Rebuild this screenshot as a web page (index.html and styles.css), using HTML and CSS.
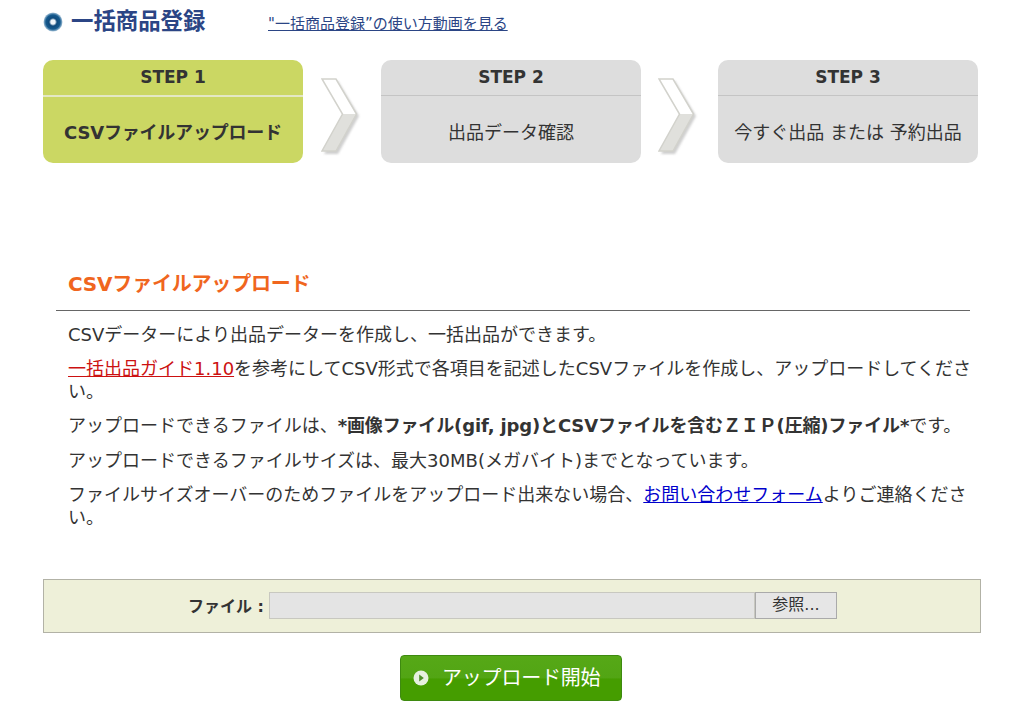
FILE: index.html
```html
<!DOCTYPE html>
<html lang="ja">
<head>
<meta charset="utf-8">
<title>一括商品登録</title>
<link rel="stylesheet" href="styles.css">
</head>
<body>
<header class="head">
  <h1 class="title">
    <svg class="bullet" width="20" height="20" viewBox="0 0 20 20"><defs><radialGradient id="bl" cx="50%" cy="50%" r="50%"><stop offset="0.22" stop-color="#f2f7fb"/><stop offset="0.42" stop-color="#0f4a7c"/><stop offset="0.75" stop-color="#155a8e"/><stop offset="1" stop-color="#a5c2d8"/></radialGradient></defs><circle cx="10" cy="10" r="9.500" fill="url(#bl)"/></svg>
    <span class="title-text">一括商品登録</span>
  </h1>
  <a class="movie" href="#">"一括商品登録”の使い方動画を見る</a>
</header>
<ol class="steps">
  <li class="step on"><div class="num">STEP 1</div><div class="desc">CSVファイルアップロード</div></li>
  <li class="arrow"><svg width="40" height="78" viewBox="0 0 40 78"><defs><filter id="s" x="-20%" y="-20%" width="140%" height="140%"><feGaussianBlur stdDeviation="1"/></filter></defs><path d="M3 3H17L38 38L17 76H3L24 38Z" fill="#bbb" filter="url(#s)" opacity=".7"/><path d="M1 1H15.500L35 36H21.500Z" fill="#fff"/><path d="M21.500 36H35.500L15 73H1Z" fill="#e0e0dc"/><path d="M1 1H15L35.500 36L15 73H1L21.500 36Z" fill="none" stroke="#d2d2cc" stroke-width="1.500"/></svg></li>
  <li class="step"><div class="num">STEP 2</div><div class="desc">出品データ確認</div></li>
  <li class="arrow arrow-b"><svg width="40" height="78" viewBox="0 0 40 78"><path d="M3 3H17L38 38L17 76H3L24 38Z" fill="#bbb" filter="url(#s)" opacity=".7"/><path d="M1 1H15.500L35 36H21.500Z" fill="#fff"/><path d="M21.500 36H35.500L15 73H1Z" fill="#e0e0dc"/><path d="M1 1H15L35.500 36L15 73H1L21.500 36Z" fill="none" stroke="#d2d2cc" stroke-width="1.500"/></svg></li>
  <li class="step"><div class="num">STEP 3</div><div class="desc">今すぐ出品 または 予約出品</div></li>
</ol>
<section class="intro">
  <h2 class="sub">CSVファイルアップロード</h2>
  <div class="body">
    <p>CSVデーターにより出品データーを作成し、一括出品ができます。</p>
    <p><a class="guide" href="#">一括出品ガイド1.10</a>を参考にしてCSV形式で各項目を記述したCSVファイルを作成し、アップロードしてください。</p>
    <p>アップロードできるファイルは、<b class="strong">*画像ファイル(gif, jpg)とCSVファイルを含むＺＩＰ(圧縮)ファイル*</b>です。</p>
    <p>アップロードできるファイルサイズは、最大30MB(メガバイト)までとなっています。</p>
    <p>ファイルサイズオーバーのためファイルをアップロード出来ない場合、<a class="form" href="#">お問い合わせフォーム</a>よりご連絡ください。</p>
  </div>
</section>
<div class="filebar">
  <b class="label">ファイル :</b>
  <span class="field"></span>
  <span class="browse">参照...</span>
</div>
<div class="submit">
  <button class="go" type="button">
    <svg width="16" height="16" viewBox="0 0 16 16"><circle cx="8" cy="8" r="7.500" fill="#e6f0df"/><path d="M6.200 4.500L10.800 8L6.200 11.500Z" fill="#4f8f2a"/></svg>
    <span class="go-text">アップロード開始</span>
  </button>
</div>
</body>
</html>
```
FILE: styles.css
```css
* { box-sizing: border-box; }
html, body { margin: 0; padding: 0; }
body {
  width: 1031px;
  height: 709px;
  overflow: hidden;
  background: #fff;
  color: #333;
  font-family: "DejaVu Sans", "Noto Sans CJK JP", sans-serif;
  font-size: 18px;
}
.head {
  display: flex;
  align-items: center;
  height: 42px;
  padding: 1px 0 0 43px;
}
.title {
  display: flex;
  align-items: center;
  gap: 8px;
  width: 225px;
  margin: 0;
  font-size: 22.4px;
  font-weight: bold;
  color: #2b4585;
}
.title-text { margin-bottom: 6px; }
.bullet { flex: none; }
.movie { padding-top: 2px; font-size: 15px; color: #2b4585; }
.steps {
  display: flex;
  align-items: flex-start;
  margin: 18px 0 0 43px;
  padding: 0;
  list-style: none;
}
.step {
  width: 260px;
  height: 103px;
  border-radius: 10px;
  background: #dddddd;
  text-align: center;
}
.step.on { background: #cbd763; }
.num {
  height: 36px;
  border-bottom: 1px solid #c4c4c4;
  font-size: 17px;
  line-height: 35px;
  font-weight: bold;
}
.on .num { border-bottom: 2px solid #e4e8c4; height: 37px; }
.desc { line-height: 73px; white-space: nowrap; }
.on .desc { font-weight: bold; line-height: 71px; letter-spacing: -0.2px; }
.arrow { width: 78px; height: 78px; padding: 18px 0 0 18px; }
.arrow-b { width: 77px; padding-left: 17px; }
.intro { margin: 0 0 0 56px; width: 914px; }
.sub {
  margin: 105px 0 0;
  padding: 2px 0 0 12px;
  height: 43px;
  border-bottom: 1px solid #666;
  font-size: 20px;
  line-height: 28px;
  font-weight: bold;
  letter-spacing: -0.2px;
  color: #f0661e;
}
.body { padding: 12px 0 0 12px; width: 916px; }
.body p { margin: 0 0 11.2px; line-height: 23px; }
.strong { letter-spacing: -0.14px; }
.guide { color: #cc1111; }
.form { color: #0000cc; }
.filebar {
  display: flex;
  align-items: center;
  width: 938px;
  height: 54px;
  margin: 50px 0 0 43px;
  padding: 0 0 1px 144px;
  border: 1px solid #b2b2a6;
  background: #eef0d9;
}
.label { width: 81px; font-size: 16px; white-space: nowrap; }
.field {
  width: 486px;
  height: 27px;
  border: 1px solid #c8c8c0;
  background: #e4e4e4;
}
.browse {
  width: 82px;
  height: 27px;
  border: 1px solid #aaa;
  background: #e6e6e6;
  font-size: 16px;
  line-height: 24px;
  text-align: center;
}
.submit { display: flex; margin: 22px 0 0 400px; }
.go {
  display: flex;
  align-items: center;
  gap: 13px;
  width: 222px;
  height: 46px;
  padding: 0 0 0 12px;
  border: 1px solid #3e8a10;
  border-radius: 4px;
  background: linear-gradient(#56a817 0, #52a514 50%, #459d00 52%, #459d00 100%);
  color: #fff;
  font-family: inherit;
  font-size: 20px;
}
.go-text { letter-spacing: -0.2px; margin-bottom: 2px; }
```
